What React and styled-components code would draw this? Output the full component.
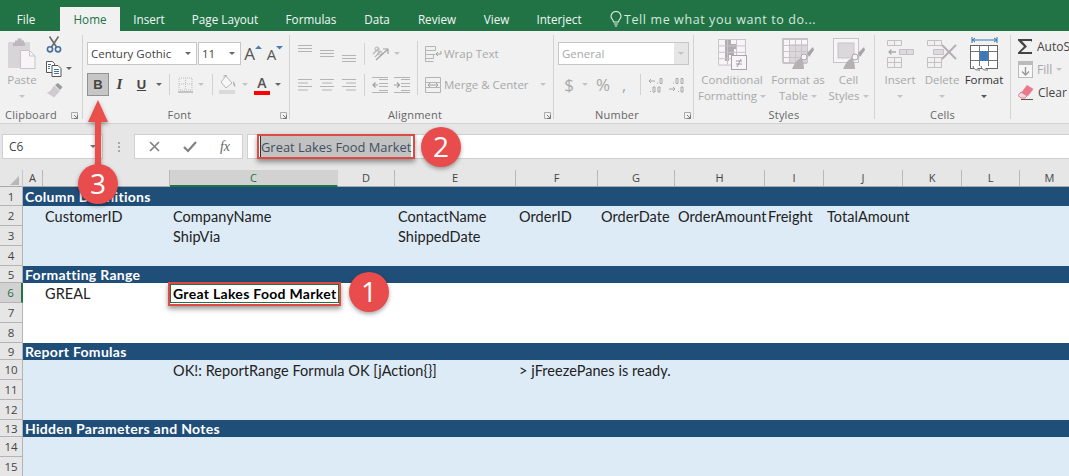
import React from 'react';
import styled, { createGlobalStyle } from 'styled-components';

const Global = createGlobalStyle`
  html, body { margin: 0; padding: 0; overflow: hidden; background: #fff; }
  * { box-sizing: border-box; }
`;
const UI = `"Open Sans", "Noto Sans", sans-serif`;
const CELL = `Lato, "Open Sans", sans-serif`;
const DIS = '#a8a8a8';
const LINE = '#b4b4b4';

const Page = styled.div`
  position: relative; width: 1069px; height: 476px; overflow: hidden;
  font-family: ${UI}; background: #fff;
`;
/* ---------- tabs ---------- */
const TabBar = styled.div`
  display: flex; height: 31px; background: #217346; align-items: flex-end; color: #f2f7f4;
`;
const Tab = styled.div`
  width: ${p => p.$w}px; height: 24px; line-height: 24px; text-align: center;
  font-size: 11.7px; flex: none;
  padding-right: ${p => p.$pr || 0}px;
  ${p => p.$active && `background:#f1f1f1;color:#217346;`}
`;
const TellMe = styled.div`
  display: flex; align-items: center; gap: 2px; height: 24px; margin-left: 15px;
  font-size: 12.5px; letter-spacing: .6px; color: #d6e8dd; white-space: nowrap;
`;
/* ---------- ribbon ---------- */
const Ribbon = styled.div`
  display: flex; height: 93px; padding-top: 4px; background: #f1f1f1; border-bottom: 1px solid #d2d2d2;
  overflow: hidden;
`;
const Group = styled.div`
  flex: none; width: ${p => p.$w}px; height: 84px; display: flex; flex-direction: column;
  ${p => !p.$last && `border-right:1px solid #d2d2d2;`}
`;
const Body = styled.div`
  height: 73px; display: flex; padding-left: ${p => p.$pl || 0}px;
`;
const Footer = styled.div`
  height: 14px; margin-bottom: -3px; display: flex; align-items: center; flex: none;
`;
const GroupLabel = styled.div`
  flex: 1; text-align: center; font-size: 11px; line-height: 14px; color: #666; letter-spacing: .02em;
  padding-right: ${p => p.$pr || 0}px;
`;
const Launcher = styled.svg`
  width: 7px; height: 7px; margin: 0 ${p => p.$mr ?? 2}px 0 4px; flex: none;
`;
const Big = styled.div`
  flex: none; width: ${p => p.$w}px; display: flex; flex-direction: column; align-items: center;
  color: ${p => p.$on ? '#333' : DIS};
`;
const BigIcon = styled.div`
  height: 37px; display: flex; align-items: center; justify-content: center;
`;
const BigLine = styled.div`
  height: 16px; line-height: 16px; font-size: 11.5px; white-space: nowrap; display: flex; align-items: center; gap: 3px;
`;
const Caret = styled.span`
  display: inline-block; width: 0; height: 0; flex: none;
  border-left: 3px solid transparent; border-right: 3px solid transparent;
  border-top: 3px solid ${p => p.$c || '#c4c4c4'};
  margin-left: ${p => p.$ml || 0}px;
`;
const SmallCol = styled.div`
  display: flex; flex-direction: column; padding-top: 1px; width: 36px; flex: none;
`;
const SmallItem = styled.div`
  height: ${p => p.$h}px; margin-bottom: ${p => p.$mb}px; display: flex; align-items: center; gap: 4px; padding-left: 2px;
`;
const Stack = styled.div`
  padding-top: 7px; display: flex; flex-direction: column; gap: 8px; flex: none;
`;
const Row2 = styled.div`
  height: 23px; display: flex; align-items: center; flex: none;
`;
const Slot = styled.div`
  width: ${p => p.$w}px; height: 23px; flex: none; display: flex; align-items: center; justify-content: ${p => p.$left ? 'flex-start' : 'center'};
  color: ${p => p.$c || '#444'}; font-size: ${p => p.$fs || 13}px;
`;
const Combo = styled.div`
  width: ${p => p.$w}px; height: 23px; flex: none; margin-right: ${p => p.$mr || 0}px;
  background: #fff; border: 1px solid #c6c6c6; display: flex; align-items: center; justify-content: space-between;
  padding-left: 3px; padding-right: 5px; font-size: 11.5px; color: ${p => p.$c || '#444'};
  white-space: nowrap;
`;
const DisabledDrop = styled.div`
  width: 14px; align-self: stretch; margin-right: -5px; background: #e6e6e6; display: flex; align-items: center; justify-content: center;
`;
const BoldBtn = styled.div`
  width: 22px; height: 23px; flex: none; background: #c6c6c6; border: 1px solid #929292; color: #444;
  font: bold 13px "Liberation Sans", sans-serif; display: flex; align-items: center; justify-content: center;
`;
const ItalicLetter = styled.span`
  font: italic 700 15px "Liberation Serif", serif; color: #444;
`;
const UnderLetter = styled.span`
  font: 700 13px "Liberation Sans", sans-serif; color: #444; text-decoration: underline;
`;
const GrowBox = styled.div`
  display: flex; align-items: flex-start; height: 23px; padding-top: 1px; gap: 0;
`;
const GrowLetter = styled.span`
  font-size: ${p => p.$s}px; line-height: 22px; color: #555;
`;
const ColorLetter = styled.span`
  width: 16px; height: 21px; display: block; text-align: center; font-size: 14px; font-weight: 600; line-height: 17px; color: #555;
  border-bottom: 4px solid #f00;
`;
const Sep = styled.div`
  width: 1px; height: ${p => p.$h || 21}px; background: #d2d2d2; flex: none; margin: 0 ${p => p.$mr ?? 0}px 0 ${p => p.$ml ?? 0}px;
`;
const FullSep = styled.div`
  width: 1px; height: 54px; margin: 6px 0 0 1px; background: #d2d2d2; flex: none;
`;
const TextBtn = styled.div`
  display: flex; align-items: center; height: 23px; font-size: 11.5px; color: ${p => p.$c || DIS}; gap: 2px; white-space: nowrap;
`;
const EditCol = styled.div`
  display: flex; flex-direction: column; white-space: nowrap;
`;
const EditRow = styled.div`
  height: 23px; display: flex; align-items: center; gap: 4px; font-size: 12px; color: ${p => p.$c || '#444'};
`;
/* ---------- formula bar ---------- */
const FormulaBar = styled.div`
  height: 46px; background: #e6e6e6; padding: 10px 0 0 2px; display: flex;
`;
const NameBox = styled.div`
  width: 101px; height: 25px; background: #fff; border: 1px solid #d0d0d0; display: flex; align-items: center; justify-content: space-between;
  padding: 0 6px 0 6px; font-size: 12px; color: #444;
`;
const Grip = styled.div`
  width: 31px; height: 25px; display: flex; flex-direction: column; align-items: center; justify-content: center; gap: 2px;
  & > i { width: 2px; height: 2px; background: #a8a8a8; display: block; }
`;
const FuncBox = styled.div`
  width: 109px; height: 25px; background: #fff; border: 1px solid #d0d0d0; display: grid; grid-template-columns: 36px 36px 1fr; padding-left: 1px;
  align-items: center; justify-items: center; color: #777;
`;
const FxLabel = styled.span`
  font: italic 14px "Liberation Serif", serif; color: #666;
`;
const FormulaInput = styled.div`
  flex: 1; height: 25px; margin-left: 4px; background: #fff; border: 1px solid #d0d0d0; border-right: 0;
  padding: 1px 0 0 12px; display: flex;
`;
const Selected = styled.span`
  width: 151px; height: 22px; line-height: 23px; background: #c2c2c2; color: #3f4f5f; font-size: 12.9px; white-space: nowrap;
  border-left: 1px solid #333; border-bottom: 1px solid #f4f4f4;
`;
/* ---------- sheet ---------- */
const COLS = [20, 127, 168, 57, 121, 82, 77, 90, 59, 79, 59, 58, 60];
const NAMES = 'ABCDEFGHIJKLM'.split('');
const gridCols = `23px ${COLS.map(c => c + 'px').join(' ')}`;
const HeaderRow = styled.div`
  display: grid; grid-template-columns: ${gridCols}; height: 17px; background: #e6e6e6;
  border-bottom: 1px solid #a9a9a9;
`;
const Corner = styled.div`
  display: flex; align-items: flex-end; justify-content: flex-end; padding: 0 3px 2px 0; border-right: 1px solid #c8c8c8;
`;
const ColHead = styled.div`
  text-align: center; font-size: 11px; line-height: 15px; color: ${p => p.$sel ? '#217346' : '#444'}; margin-top: 0;
  height: ${p => p.$sel ? 17 : 16}px; border-right: 1px solid #b9b9b9;
  ${p => p.$sel && `background:#d2d2d2;border-bottom:2px solid #217346;border-right-color:#d2d2d2;`}
`;
const SheetRow = styled.div`
  display: grid; grid-template-columns: ${gridCols}; height: ${p => p.$h}px;
  background: ${p => p.$kind === 'dark' ? '#1f4e79' : p.$kind === 'light' ? '#ddebf7' : '#fff'};
`;
const RowHead = styled.div`
  background: ${p => p.$sel ? '#d2d2d2' : '#e6e6e6'}; border-bottom: 1px solid #b4b4b4;
  border-right: ${p => p.$sel ? '2px solid #217346' : '1px solid #b4b4b4'};
  text-align: center; font-size: 11.5px; color: ${p => p.$sel ? '#217346' : '#444'};
  display: flex; align-items: center; justify-content: center;
`;
const Cell = styled.div`
  font-family: ${CELL}; white-space: nowrap; padding-left: ${p => p.$pl}px; display: flex; align-items: center; min-width: 0;
  font-size: 14.5px; letter-spacing: .05px; color: ${p => p.$head ? '#fff' : '#222'};
  font-weight: ${p => p.$bold ? 700 : 400};
  ${p => p.$bold && `font-size:14px;letter-spacing:.3px;`}
  ${p => p.$active && `color:#000;`}
`;
/* ---------- annotations ---------- */
const Badge = styled.div`
  position: absolute; left: ${p => p.$x - 20}px; top: ${p => p.$y - 20}px; width: 40px; height: 40px; border-radius: 50%;
  background: #e84c4c; color: #fff; font: 28px "Open Sans", sans-serif; line-height: 39px; text-align: center;
  box-shadow: 0 2px 4px rgba(0,0,0,.35);
`;
const RedBox = styled.div`
  position: absolute; left: ${p => p.$x}px; top: ${p => p.$y}px; width: ${p => p.$w}px; height: ${p => p.$h}px;
  border: 2px solid #dd4a42; box-shadow: 0 3px 5px rgba(0,0,0,.4);
`;
const CellSelection = styled.div`
  position: absolute; left: 170px; top: 284px; width: 169px; height: 19px; border: 1.5px solid #217346;
`;
const Arrow = styled.svg`
  position: absolute; left: 82px; top: 96px; width: 32px; height: 76px; overflow: visible;
  filter: drop-shadow(0 2px 2px rgba(0,0,0,.35));
`;

/* ---------- icons ---------- */
const PasteIcon = () => (
  <svg width="28" height="31" viewBox="0 0 28 31">
    <rect x="0" y="4" width="22" height="26" rx="1" fill="#d8d4d8" />
    <path d="M7 5V2.5h2.5V.5h4v2h2.5V5z M5 5h12v3H5z" fill="#bdb8bd" />
    <path d="M12.5 12.5h9l5.5 5.5v12.5H12.5z" fill="#f7f5f7" stroke="#c8c4c8" />
    <path d="M21.5 12.5V18H27" fill="none" stroke="#c8c4c8" />
  </svg>
);
const CutIcon = () => (
  <svg width="16" height="17" viewBox="0 0 16 17" fill="none">
    <path d="M3.5 0.5 L10.5 11 M12.5 0.5 L5.5 11" stroke="#6b6b6b" strokeWidth="1.6" />
    <circle cx="4" cy="13.3" r="2.6" stroke="#41719c" strokeWidth="1.6" />
    <circle cx="12" cy="13.3" r="2.6" stroke="#41719c" strokeWidth="1.6" />
  </svg>
);
const CopyIcon = () => (
  <svg width="16" height="16" viewBox="0 0 16 16" fill="none" stroke="#555">
    <path d="M.5 .5h6l2 2v9h-8z" fill="#fff" />
    <path d="M6 4.5h6l3 3v8H6z" fill="#fff" />
    <path d="M8 8.5h5M8 10.5h5M8 12.5h5M2 3.5h3M2 5.5h2M2 7.5h2" stroke="#41719c" />
  </svg>
);
const BrushIcon = () => (
  <svg width="17" height="15" viewBox="0 0 17 15">
    <path d="M9 2 L12 0 L16.5 4 L14 7 Z" fill="#9b9b9b" />
    <path d="M8 2.5 L14 8 L8 14.5 L0.5 9.5 C4 9 6 6 8 2.5Z" fill="#cfcbcf" />
  </svg>
);
const GrowA = ({ size, up }) => (
  <GrowBox>
    <GrowLetter $s={size}>A</GrowLetter>
    <svg width="7" height="7" viewBox="0 0 7 7" style={{ marginTop: 2 }}>
      <path d={up ? 'M0 4l3.500-3.500L7 4z' : 'M0 1h7L3.500 4.500z'} fill="#4a7fb5" />
    </svg>
  </GrowBox>
);
const BorderIcon = () => (
  <svg width="15" height="16" viewBox="0 0 15 16" fill="none" stroke="#c0bcc0" strokeDasharray="1 1">
    <path d="M1 1h13v12H1zM7.5 1v12M1 7h13" />
    <path d="M0 15h15" stroke="#b0b0b0" strokeDasharray="none" strokeWidth="1.4" />
  </svg>
);
const FillIcon = () => (
  <svg width="18" height="19" viewBox="0 0 18 19">
    <path d="M7 1 L13 8 L7 13 L2 7 Z" fill="#f7f7f7" stroke="#b8b8b8" />
    <path d="M5 2.5 V0.5 H8" fill="none" stroke="#b8b8b8" />
    <path d="M14 6 C16 8 17 10 16 12 C14 11 14 8 14 6Z" fill="#b8b8b8" />
    <rect x="0" y="15" width="16" height="4" fill="#dadada" />
  </svg>
);
const AlignV = ({ o }) => (
  <svg width="14" height="23" viewBox="0 0 14 23" stroke={LINE}>
    {[0, 3, 6].map(d => <path key={d} d={`M0 ${o + d}.5H14`} />)}
  </svg>
);
const AlignH = ({ k }) => {
  const ws = [[0, 14], [0, 10], [0, 14], [0, 10]];
  return (
    <svg width="14" height="23" viewBox="0 0 14 23" stroke={LINE}>
      {ws.map(([a, w], i) => {
        const x = k === 'l' ? 0 : k === 'c' ? (14 - w) / 2 : 14 - w;
        return <path key={i} d={`M${x} ${6.5 + i * 3.5}H${x + w}`} />;
      })}
    </svg>
  );
};
const Orient = () => (
  <svg width="17" height="17" viewBox="0 0 17 17" fill="none" stroke={LINE}>
    <path d="M1 9 L7 3 M3 12 L9 6" strokeWidth="1.2" />
    <circle cx="5" cy="4" r="2" />
    <circle cx="8" cy="8" r="2" />
    <path d="M4 15 L15 5 M11 4 h5 v5" stroke="#a0a0a0" strokeWidth="1.2" />
  </svg>
);
const Indent = ({ dir }) => (
  <svg width="16" height="16" viewBox="0 0 16 16" fill="none" stroke={LINE}>
    <path d="M7 2.5h9M7 6.5h9M7 9.5h9M7 13.5h9M0 15.5h16M0 .5h16" />
    <path d={dir < 0 ? 'M6 8H1M3.5 5.5L1 8l2.5 2.5' : 'M0 8h5M3 5.5L5.5 8 3 10.5'} stroke="#a0a0a0" strokeWidth="1.2" />
  </svg>
);
const WrapIcon = () => (
  <svg width="17" height="16" viewBox="0 0 17 16" fill="none" stroke={LINE}>
    <path d="M.5.5h10v4H.5zM.5 4.500v4h10M.5 8.500v4h8v-4M.5 12.500v3h8" />
    <path d="M16 5v3h-5M13 6l-2 2 2 2" stroke="#a0a0a0" />
  </svg>
);
const MergeIcon = () => (
  <svg width="17" height="16" viewBox="0 0 17 16" fill="none" stroke={LINE}>
    <path d="M.5.5h15v15H.5zM.5 5.500h15M.5 10.500h15" />
    <path d="M3 8h10M5 6l-2 2 2 2M11 6l2 2-2 2" stroke="#a0a0a0" />
  </svg>
);
const DecInc = () => (
  <svg width="17" height="16" viewBox="0 0 17 16" fill="none" stroke="#a8a8a8">
    <path d="M7 4H1M3 2L1 4l2 2" />
    <path d="M9.500 6.500v-1M12 1.500h2v5h-2z" />
    <path d="M2.500 15v-1M5 10h2v5H5zM10 10h2v5h-2z" />
  </svg>
);
const DecDec = () => (
  <svg width="17" height="16" viewBox="0 0 17 16" fill="none" stroke="#a8a8a8">
    <path d="M4.500 6.500v-1M7 1.500h2v5H7zM12 1.500h2v5h-2z" />
    <path d="M0 12h6M4 10l2 2-2 2" />
    <path d="M9.500 15v-1M12 10h2v5h-2z" />
  </svg>
);
const grid = (x, y, c, r, w, h, s) => {
  const out = [];
  for (let i = 0; i <= c; i++) out.push(<path key={'c' + i} d={`M${x + i * w + .5} ${y}v${r * h}`} stroke={s} />);
  for (let j = 0; j <= r; j++) out.push(<path key={'r' + j} d={`M${x} ${y + j * h + .5}h${c * w}`} stroke={s} />);
  return out;
};
const CondIcon = () => (
  <svg width="30" height="32" viewBox="0 0 30 32" fill="none">
    <rect x=".5" y=".5" width="27" height="26" fill="#f7f5f7" />
    <rect x="8" y="1" width="6" height="5" fill="#b0acb0" />
    <rect x="8" y="6" width="12" height="5" fill="#b0acb0" />
    <rect x="8" y="11" width="9" height="6" fill="#b0acb0" />
    <rect x="8" y="17" width="4" height="6" fill="#b0acb0" />
    {grid(1, 1, 3, 4, 9, 6.4, '#c8c4c8')}
    <rect x="14.5" y="17.5" width="15" height="14" fill="#f7f5f7" stroke="#a8a4a8" />
    <path d="M19 23h6M19 26h6M24 21l-4 8" stroke="#888" strokeWidth=".8" />
  </svg>
);
const TableBrush = ({ cell }) => (
  <svg width="32" height="32" viewBox="0 0 32 32" fill="none">
    <rect x=".5" y=".5" width="25" height="24" fill="#f7f5f7" stroke="#c8c4c8" />
    {cell
      ? <rect x="5" y="5" width="16" height="15" fill="#dbd8db" stroke="#c8c4c8" />
      : <><rect x="7" y="6" width="18" height="18" fill="#dbd8db" />{grid(1, 1, 4, 4, 6, 6, '#c8c4c8')}</>}
    <path d="M31 9 L25 15 L27 19 L32 12 Z" fill="#a8a4a8" />
    <circle cx="22" cy="19" r="3" fill="#f7f5f7" stroke="#a8a4a8" />
    <path d="M19 20 C14 22 12 27 10 31 H22 C22 27 21 24 20 21 Z" fill="#b4b0b4" />
  </svg>
);
const InsertIcon = () => (
  <svg width="27" height="28" viewBox="0 0 27 28" fill="none" stroke="#c4c0c4">
    <path d="M.5.5h14v5H.5zM7.5.5v5M.5 17.5h14v10H.5zM.5 22.5h14M7.5 17.5v10" />
    <path d="M12.5 9.5h14v5h-14zM19.5 9.5v5" fill="#dedbde" />
    <path d="M9 12H2M4.5 9.5L2 12l2.5 2.5" stroke="#a8a8a8" strokeWidth="1.3" />
  </svg>
);
const DeleteIcon = () => (
  <svg width="31" height="28" viewBox="0 0 31 28" fill="none" stroke="#c4c0c4">
    <path d="M.5.5h14v5H.5zM7.5.5v5M.5 17.5h14v10H.5zM.5 22.5h14M7.5 17.5v10" />
    <path d="M6.5 9.5h10v5h-10z" fill="#dedbde" />
    <path d="M15 5 L29 19 M29 5 L15 19" stroke="#b4b0b4" strokeWidth="2" />
  </svg>
);
const FormatIcon = () => (
  <svg width="29" height="35" viewBox="0 0 29 35" fill="none">
    <path d="M2 4h25M2 1v6M27 1v6M5 2L2.500 4 5 6M24 2l3 2-3 2" stroke="#2e75b6" />
    <rect x=".5" y="9.500" width="27" height="23" fill="#fff" stroke="#666" />
    <path d="M9.500 10v20M18.500 10v20M1 15.500h26M1 24.500h26" stroke="#777" />
    <rect x="10" y="15" width="8" height="10" fill="#3f7ab8" />
    <path d="M3 30c1 4 3 4 7 4M11 30c1 4 3 4 7 4" stroke="#666" fill="#fff" />
  </svg>
);
const Sigma = () => (
  <svg width="15" height="15" viewBox="0 0 15 15"><path d="M0 0H14V3L13 2H4L9 7.500 3 13H14V15H0V13.500L6 7.500 0 1.500Z" fill="#444" /></svg>
);
const FillDown = () => (
  <svg width="15" height="17" viewBox="0 0 15 17" fill="none">
    <rect x=".5" y=".5" width="14" height="16" fill="#f7f7f7" stroke="#bbb" />
    <rect x="1" y="1" width="13" height="3" fill="#bbb" />
    <path d="M7.500 6v8M4 10.500l3.500 3.500L11 10.500" stroke="#999" strokeWidth="1.4" />
  </svg>
);
const Eraser = () => (
  <svg width="16" height="15" viewBox="0 0 16 15">
    <path d="M9 0L15.500 4 10 11 3 8Z" fill="#e8788a" />
    <path d="M3 7L9 11 7 13H3L0 10.500Z" fill="#f9d9df" stroke="#e8788a" />
    <path d="M3 14.500H15" stroke="#555" />
  </svg>
);
const Bulb = () => (
  <svg width="12" height="16" viewBox="0 0 12 16" fill="none" stroke="#e6f0ea" strokeWidth="1.1">
    <path d="M3.500 11C3.500 8.500 1 8 1 5.500a5 5 0 0 1 10 0C11 8 8.500 8.500 8.500 11z" />
    <path d="M4 13h4M4.800 15h2.400" />
  </svg>
);
const LauncherIcon = ({ mr }) => (
  <Launcher viewBox="0 0 7 7" fill="none" $mr={mr}>
    <path d="M6.500 3V.5H.5v6H3" stroke="#aaa" />
    <path d="M3 3l3.500 3.500M3 6.500h3.500V3" stroke="#777" />
  </Launcher>
);

/* ---------- data ---------- */
const ROWS = [
  { n: 1, h: 19, kind: 'dark', cells: { 0: 'Column Definitions' } },
  { n: 2, h: 20, kind: 'light', cells: { 1: 'CustomerID', 2: 'CompanyName', 4: 'ContactName', 5: 'OrderID', 6: 'OrderDate', 7: 'OrderAmount', 8: 'Freight', 9: 'TotalAmount' } },
  { n: 3, h: 20, kind: 'light', cells: { 2: 'ShipVia', 4: 'ShippedDate' } },
  { n: 4, h: 20, kind: 'light', cells: {} },
  { n: 5, h: 17, kind: 'dark', cells: { 0: 'Formatting Range' } },
  { n: 6, h: 20, kind: 'white', cells: { 1: 'GREAL', 2: 'Great Lakes Food Market' } },
  { n: 7, h: 20, kind: 'white', cells: {} },
  { n: 8, h: 20, kind: 'white', cells: {} },
  { n: 9, h: 17, kind: 'dark', cells: { 0: 'Report Fomulas' } },
  { n: 10, h: 20, kind: 'light', cells: { 2: 'OK!: ReportRange Formula OK [jAction{}]', 5: '> jFreezePanes is ready.' } },
  { n: 11, h: 20, kind: 'light', cells: {} },
  { n: 12, h: 20, kind: 'light', cells: {} },
  { n: 13, h: 17, kind: 'dark', cells: { 0: 'Hidden Parameters and Notes' } },
  { n: 14, h: 20, kind: 'light', cells: {} },
  { n: 15, h: 20, kind: 'light', cells: {} },
];
const TABS = [['File', 60, false, 8], ['Home', 60, true], ['Insert', 58], ['Page Layout', 94], ['Formulas', 78], ['Data', 54], ['Review', 66], ['View', 53], ['Interject', 72]];

export default function App() {
  return (
    <Page>
      <Global />
      <TabBar>
        {TABS.map(([t, w, a, pr]) => <Tab key={t} $w={w} $active={a} $pr={pr}>{t}</Tab>)}
        <TellMe><Bulb /> Tell me what you want to do...</TellMe>
      </TabBar>

      <Ribbon>
        <Group $w={83}>
          <Body>
            <Big $w={44}>
              <BigIcon><PasteIcon /></BigIcon>
              <BigLine>Paste</BigLine>
              <BigLine><Caret /></BigLine>
            </Big>
            <SmallCol>
              <SmallItem $h={16} $mb={9}><CutIcon /></SmallItem>
              <SmallItem $h={15} $mb={7}><CopyIcon /><Caret $c="#666" /></SmallItem>
              <SmallItem $h={15} $mb={0}><BrushIcon /></SmallItem>
            </SmallCol>
          </Body>
          <Footer><GroupLabel $pr={5}>Clipboard</GroupLabel><LauncherIcon mr={4} /></Footer>
        </Group>

        <Group $w={207}>
          <Body $pl={4}>
            <Stack>
              <Row2>
                <Combo $w={110} $mr={1}>Century Gothic<Caret $c="#666" /></Combo>
                <Combo $w={43}>11<Caret $c="#666" /></Combo>
                <Slot $w={24}><GrowA size={17} up /></Slot>
                <Slot $w={20}><GrowA size={15} /></Slot>
              </Row2>
              <Row2>
                <BoldBtn>B</BoldBtn>
                <Slot $w={21}><ItalicLetter>I</ItalicLetter></Slot>
                <Slot $w={23}><UnderLetter>U</UnderLetter></Slot>
                <Slot $w={11}><Caret $c="#666" /></Slot>
                <Slot $w={10}><Sep /></Slot>
                <Slot $w={22}><BorderIcon /></Slot>
                <Slot $w={10}><Caret /></Slot>
                <Slot $w={12}><Sep /></Slot>
                <Slot $w={20}><FillIcon /></Slot>
                <Slot $w={14}><Caret /></Slot>
                <Slot $w={20}><ColorLetter>A</ColorLetter></Slot>
                <Slot $w={12}><Caret $c="#666" /></Slot>
              </Row2>
            </Stack>
          </Body>
          <Footer><GroupLabel>Font</GroupLabel><LauncherIcon /></Footer>
        </Group>

        <Group $w={264}>
          <Body $pl={8}>
            <Stack>
              <Row2>
                <Slot $w={22} $left><AlignV o={3} /></Slot>
                <Slot $w={22} $left><AlignV o={8} /></Slot>
                <Slot $w={22} $left><AlignV o={13} /></Slot>
                <Sep $h={22} $mr={7} />
                <Slot $w={22} $left><Orient /></Slot>
                <Caret />
              </Row2>
              <Row2>
                <Slot $w={22} $left><AlignH k="l" /></Slot>
                <Slot $w={22} $left><AlignH k="c" /></Slot>
                <Slot $w={22} $left><AlignH k="r" /></Slot>
                <Sep $h={22} $mr={7} />
                <Slot $w={22} $left><Indent dir={-1} /></Slot>
                <Slot $w={22} $left><Indent dir={1} /></Slot>
              </Row2>
            </Stack>
            <FullSep />
            <Slot $w={7} />
            <Stack>
              <TextBtn><WrapIcon />Wrap Text</TextBtn>
              <TextBtn><MergeIcon />Merge &amp; Center<Caret $ml={9} /></TextBtn>
            </Stack>
          </Body>
          <Footer><GroupLabel>Alignment</GroupLabel><LauncherIcon /></Footer>
        </Group>

        <Group $w={140}>
          <Body $pl={4}>
            <Stack>
              <Row2>
                <Combo $w={131} $c={DIS}>General<DisabledDrop><Caret /></DisabledDrop></Combo>
              </Row2>
              <Row2>
                <Slot $w={2} />
                <Slot $w={18} $c={DIS} $fs={17}>$</Slot>
                <Slot $w={14}><Caret /></Slot>
                <Slot $w={22} $c={DIS} $fs={17}>%</Slot>
                <Slot $w={20} $c={DIS} $fs={16}>,</Slot>
                <Slot $w={12}><Sep /></Slot>
                <Slot $w={21}><DecInc /></Slot>
                <Slot $w={20}><DecDec /></Slot>
              </Row2>
            </Stack>
          </Body>
          <Footer><GroupLabel>Number</GroupLabel><LauncherIcon /></Footer>
        </Group>

        <Group $w={181}>
          <Body $pl={5}>
            <Big $w={66}>
              <BigIcon><CondIcon /></BigIcon>
              <BigLine>Conditional</BigLine>
              <BigLine>Formatting<Caret /></BigLine>
            </Big>
            <Big $w={66}>
              <BigIcon><TableBrush /></BigIcon>
              <BigLine>Format as</BigLine>
              <BigLine>Table<Caret /></BigLine>
            </Big>
            <Big $w={35}>
              <BigIcon><TableBrush cell /></BigIcon>
              <BigLine>Cell</BigLine>
              <BigLine>Styles<Caret /></BigLine>
            </Big>
          </Body>
          <Footer><GroupLabel>Styles</GroupLabel></Footer>
        </Group>

        <Group $w={136}>
          <Body $pl={5}>
            <Big $w={40}>
              <BigIcon><InsertIcon /></BigIcon>
              <BigLine>Insert</BigLine>
              <BigLine><Caret /></BigLine>
            </Big>
            <Big $w={44}>
              <BigIcon><DeleteIcon /></BigIcon>
              <BigLine>Delete</BigLine>
              <BigLine><Caret /></BigLine>
            </Big>
            <Big $w={40} $on>
              <BigIcon><FormatIcon /></BigIcon>
              <BigLine>Format</BigLine>
              <BigLine><Caret $c="#555" /></BigLine>
            </Big>
          </Body>
          <Footer><GroupLabel>Cells</GroupLabel></Footer>
        </Group>

        <Group $w={70} $last>
          <Body $pl={7}>
            <EditCol>
              <EditRow><Sigma />AutoSum</EditRow>
              <EditRow $c={DIS}><FillDown />Fill<Caret /></EditRow>
              <EditRow><Eraser />Clear<Caret $c="#666" /></EditRow>
            </EditCol>
          </Body>
        </Group>
      </Ribbon>

      <FormulaBar>
        <NameBox>C6<Caret $c="#777" /></NameBox>
        <Grip><i /><i /><i /></Grip>
        <FuncBox>
          <svg width="13" height="13" viewBox="0 0 13 13" stroke="#808080" strokeWidth="1.6"><path d="M2 2l9 9M11 2l-9 9" /></svg>
          <svg width="14" height="13" viewBox="0 0 14 13" fill="none" stroke="#808080" strokeWidth="2.200"><path d="M1 7l4 4 8-9" /></svg>
          <FxLabel>fx</FxLabel>
        </FuncBox>
        <FormulaInput><Selected>Great Lakes Food Market</Selected></FormulaInput>
      </FormulaBar>

      <HeaderRow>
        <Corner><svg width="9" height="9" viewBox="0 0 9 9"><path d="M9 0V9H0Z" fill="#b8b8b8" /></svg></Corner>
        {NAMES.map(n => <ColHead key={n} $sel={n === 'C'}>{n}</ColHead>)}
      </HeaderRow>
      {ROWS.map(r => (
        <SheetRow key={r.n} $h={r.h} $kind={r.kind}>
          <RowHead $sel={r.n === 6}>{r.n}</RowHead>
          {NAMES.map((_, i) => (
            <Cell key={i} $pl={i < 2 ? 2 : 3} $head={r.kind === 'dark'} $bold={r.kind === 'dark' || (r.n === 6 && i === 2)} $active={r.n === 6 && i === 2}>
              {r.cells[i]}
            </Cell>
          ))}
        </SheetRow>
      ))}

      <CellSelection />
      <RedBox $x={168} $y={282} $w={173} $h={24} />
      <RedBox $x={257} $y={134} $w={158} $h={25} />
      <Arrow viewBox="0 0 32 76">
        <path d="M16 4 L26 26 H19 V76 H13 V26 H6 Z" fill="#ea4f4a" />
      </Arrow>
      <Badge $x={369} $y={292}>1</Badge>
      <Badge $x={441} $y={147}>2</Badge>
      <Badge $x={98} $y={184}>3</Badge>
    </Page>
  );
}
